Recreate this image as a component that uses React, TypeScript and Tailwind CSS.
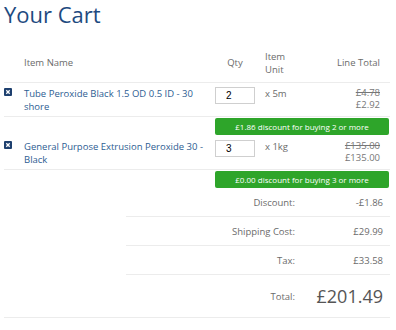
import React from 'react';

interface CartItem {
  name: string;
  qty: number;
  unit: string;
  was: string;
  now: string;
  discount: string;
}

const items: CartItem[] = [
  {
    name: 'Tube Peroxide Black 1.5 OD 0.5 ID - 30 shore',
    qty: 2,
    unit: 'x 5m',
    was: '£4.78',
    now: '£2.92',
    discount: '£1.86 discount for buying 2 or more',
  },
  {
    name: 'General Purpose Extrusion Peroxide 30 - Black',
    qty: 3,
    unit: 'x 1kg',
    was: '£135.00',
    now: '£135.00',
    discount: '£0.00 discount for buying 3 or more',
  },
];

const RemoveIcon: React.FC = () => (
  <svg width="8" height="8" viewBox="0 0 8 8">
    <rect width="8" height="8" rx="1" fill="#1d3f6e" />
    <path d="M2.3 2.3 L5.7 5.7 M5.7 2.3 L2.3 5.7" stroke="#fff" strokeWidth="1.3" />
  </svg>
);

const SummaryRow: React.FC<{ label: string; value: string }> = ({ label, value }) => (
  <div className="flex">
    <div className="w-[122px]" />
    <div className="flex flex-1 h-[29px] items-center border-b border-[#ececec]">
      <div className="w-[169px] text-right">{label}</div>
      <div className="flex-1 text-right pr-[7px]">{value}</div>
    </div>
  </div>
);

export default function App() {
  return (
    <div
      className="w-[396px] h-[330px] bg-white pl-[4px] pr-[6px] text-[9.5px] leading-[13px] text-[#6b6b6b]"
      style={{ fontFamily: '"Open Sans", sans-serif' }}
    >
      <h1 className="text-[22px] leading-[28px] text-[#1e4a80]">Your Cart</h1>

      {/* Header */}
      <div className="mt-[15px] flex h-[40px] items-center border-b border-[#ececec]">
        <div className="w-[20px]" />
        <div className="w-[186px]">Item Name</div>
        <div className="w-[50px] pl-[5px]">
          <div className="w-[40px] text-center">Qty</div>
        </div>
        <div className="w-[60px] pl-[5px]">
          Item
          <br />
          Unit
        </div>
        <div className="flex-1 text-right pr-[10px]">Line Total</div>
      </div>

      {items.map((item, i) => (
        <div key={i}>
          <div className="flex pt-[4px] pb-[3px] border-b border-[#ececec]">
            <div className="w-[20px] pt-[1px]">
              <RemoveIcon />
            </div>
            <div className="w-[186px] pr-[4px] text-[#2d5d92]">{item.name}</div>
            <div className="w-[50px] pl-[5px]">
              <input
                readOnly
                value={item.qty}
                className="w-[40px] h-[17px] border border-[#cfcfcf] pl-[10px] text-[10px] text-black outline-none"
                style={{ fontFamily: '"Liberation Sans", Arial, sans-serif' }}
              />
            </div>
            <div className="w-[60px] pl-[5px]">{item.unit}</div>
            <div className="flex-1 text-right pr-[10px] leading-[12px] text-[#777]">
              <div className="line-through">{item.was}</div>
              <div>{item.now}</div>
            </div>
          </div>
          <div className="pl-[211px] pr-[1px] pt-[1px] pb-[1px]">
            <div className="h-[17px] rounded-[2px] bg-[#2ea52a] text-center text-[8px] leading-[17px] text-white">
              {item.discount}
            </div>
          </div>
        </div>
      ))}

      {/* Summary */}
      <div className="-mt-[1px]">
        <SummaryRow label="Discount:" value="-£1.86" />
        <SummaryRow label="Shipping Cost:" value="£29.99" />
        <SummaryRow label="Tax:" value="£33.58" />
        <div className="flex h-[43px] items-center border-b border-[#ececec]">
          <div className="w-[122px]" />
          <div className="w-[169px] text-right">Total:</div>
          <div className="flex-1 text-right pr-[7px] text-[18px] leading-[24px] text-[#555]">£201.49</div>
        </div>
      </div>
    </div>
  );
}
